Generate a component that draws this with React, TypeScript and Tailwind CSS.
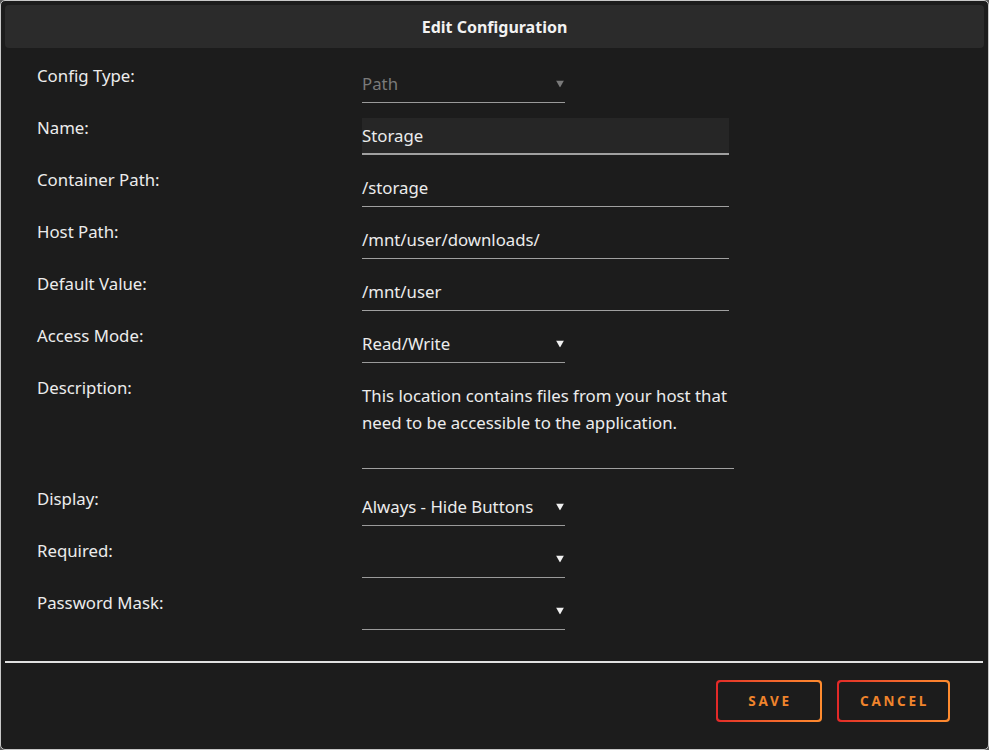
import React from 'react';

const Arrow: React.FC<{ dim?: boolean }> = ({ dim }) => (
  <svg width="8" height="7" viewBox="0 0 8 7" className="absolute right-[1px] top-1/2 -translate-y-1/2">
    <path d="M0 0 H8 L4 7 Z" fill={dim ? '#7a7a7a' : '#f0f0f0'} />
  </svg>
);

const Select: React.FC<{ value?: string; dim?: boolean }> = ({ value, dim }) => (
  <div className="relative w-[203px] h-[37px] flex items-center border-b border-[#9a9a9a]">
    <span className={dim ? 'text-[#7a7a7a]' : 'text-[#ececec]'}>{value}</span>
    <Arrow dim={dim} />
  </div>
);

const TextInput: React.FC<{ value: string; active?: boolean }> = ({ value, active }) => (
  <div
    className={`w-[367px] h-[37px] flex items-center ${
      active ? 'bg-[#262626] border-b-2 border-[#a0a0a0]' : 'border-b border-[#a0a0a0]'
    }`}
  >
    <span className="text-[#ececec]">{value}</span>
  </div>
);

const Row: React.FC<{ label: string; className?: string; children: React.ReactNode }> = ({
  label,
  className,
  children
}) => (
  <div className={`flex ${className ?? 'mt-[15px]'}`}>
    <div className="w-[325px] leading-[20px] text-[#ececec]">{label}</div>
    {children}
  </div>
);

const Button: React.FC<{ label: string; width: string }> = ({ label, width }) => (
  <div className={`${width} h-[42px] rounded-[4px] p-[2px] bg-gradient-to-r from-[#e22828] to-[#ff8c2f]`}>
    <div className="w-full h-full rounded-[3px] bg-[#1c1c1c] flex items-center justify-center">
      <span className="text-[13.5px] font-bold tracking-[0.2em] text-[#f0842c] pl-[2px]">{label}</span>
    </div>
  </div>
);

export default function App() {
  return (
    <div className="w-[989px] h-[750px] bg-[#5a5a5a] font-['Noto_Sans',sans-serif] text-[16.8px]">
      <div className="h-full border border-[#c8c8c8] rounded-[5px] bg-[#1c1c1c] p-[4px] flex flex-col">
        <div className="h-[43px] bg-[#2b2b2b] rounded-[4px] flex items-center justify-center">
          <span className="font-bold text-[16px] text-[#f2f2f2]">Edit Configuration</span>
        </div>

        <div className="pl-[32px] flex flex-col">
          <Row label="Config Type:" className="mt-[18px]">
            <Select value="Path" dim />
          </Row>
          <Row label="Name:">
            <TextInput value="Storage" active />
          </Row>
          <Row label="Container Path:">
            <TextInput value="/storage" />
          </Row>
          <Row label="Host Path:">
            <TextInput value="/mnt/user/downloads/" />
          </Row>
          <Row label="Default Value:">
            <TextInput value="/mnt/user" />
          </Row>
          <Row label="Access Mode:">
            <Select value="Read/Write" />
          </Row>
          <Row label="Description:">
            <div className="w-[372px] h-[91px] border-b border-[#a0a0a0] pt-[4px] leading-[27px] text-[#ececec]">
              This location contains files from your host that need to be accessible to the application.
            </div>
          </Row>
          <Row label="Display:" className="mt-[20px]">
            <Select value="Always - Hide Buttons" />
          </Row>
          <Row label="Required:">
            <Select />
          </Row>
          <Row label="Password Mask:">
            <Select />
          </Row>
        </div>

        <div className="mt-[31px] h-[2px] bg-[#e0e0e0] mr-[1px]" />

        <div className="flex justify-end gap-[15px] pr-[34px] mt-[17px]">
          <Button label="SAVE" width="w-[106px]" />
          <Button label="CANCEL" width="w-[113px]" />
        </div>
      </div>
    </div>
  );
}
